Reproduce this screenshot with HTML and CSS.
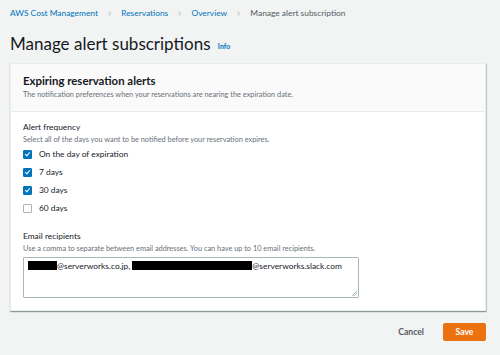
FILE: index.html
```html
<!DOCTYPE html>
<html lang="en">
<head>
  <meta charset="UTF-8">
  <title>Manage alert subscriptions</title>
  <link rel="stylesheet" href="styles.css">
</head>
<body>

  <nav class="crumbs">
    <a href="#">AWS Cost Management</a>
    <span class="sep">&gt;</span>
    <a href="#">Reservations</a>
    <span class="sep">&gt;</span>
    <a href="#">Overview</a>
    <span class="sep">&gt;</span>
    <span class="current">Manage alert subscription</span>
  </nav>

  <h1 class="title">Manage alert subscriptions <a class="info" href="#">Info</a></h1>

  <div class="card">
    <div class="card-head">
      <h2>Expiring reservation alerts</h2>
      <p>The notification preferences when your reservations are nearing the expiration date.</p>
    </div>

    <div class="card-body">
      <div class="field">
        <div class="label">Alert frequency</div>
        <div class="hint">Select all of the days you want to be notified before your reservation expires.</div>
        <div class="checks">
          <label class="check"><span class="box on"></span>On the day of expiration</label>
          <label class="check"><span class="box on"></span>7 days</label>
          <label class="check"><span class="box on"></span>30 days</label>
          <label class="check"><span class="box"></span>60 days</label>
        </div>
      </div>

      <div class="field">
        <div class="label">Email recipients</div>
        <div class="hint">Use a comma to separate between email addresses. You can have up to 10 email recipients.</div>
        <div class="textarea">
          <span class="redact short"></span>@serverworks.co.jp, <span class="redact long"></span>@serverworks.slack.com
          <span class="grip"></span>
        </div>
      </div>
    </div>
  </div>

  <div class="actions">
    <button class="btn-link">Cancel</button>
    <button class="btn-primary">Save</button>
  </div>

</body>
</html>
```

FILE: styles.css
```css
body {
  margin: 0;
  padding: 0 14px 0 10px;
  background: #f2f3f3;
  font-family: Lato, "Noto Sans", Arial, sans-serif;
  color: #16191f;
}

.crumbs {
  display: flex;
  align-items: center;
  gap: 9px;
  height: 26px;
  font-size: 8.4px;
}

.crumbs a {
  color: #0073bb;
  text-decoration: none;
}

.crumbs .sep {
  color: #aab7b8;
  font-size: 9px;
  transform: scaleX(0.7);
}

.crumbs .current {
  color: #545b64;
}

.title {
  margin: 4px 0 3px;
  font-size: 17px;
  font-weight: 400;
  line-height: 28px;
}

.info {
  font-size: 7px;
  font-weight: 700;
  color: #0073bb;
  text-decoration: none;
  vertical-align: middle;
  margin-left: 3px;
}

.card {
  background: #fff;
  border: 1px solid #eaeded;
  box-shadow: 0 1px 1px 0 rgba(0, 28, 36, 0.3), 1px 1px 1px 0 rgba(0, 28, 36, 0.15);
}

.card-head {
  background: #fafafa;
  border-bottom: 1px solid #eaeded;
  padding: 9px 12px 8px;
  height: 30px;
}

.card-head h2 {
  margin: 0;
  font-size: 11.4px;
  font-weight: 700;
  line-height: 16px;
}

.card-head p {
  margin: 1px 0 0;
  font-size: 7.35px;
  color: #687078;
  line-height: 10px;
}

.card-body {
  padding: 8px 12px 12px;
  display: flex;
  flex-direction: column;
  gap: 14px;
}

.label {
  font-size: 8.4px;
  line-height: 14px;
  color: #16191f;
}

.hint {
  font-size: 7.35px;
  line-height: 10px;
  color: #687078;
  margin-top: 1px;
}

.checks {
  display: flex;
  flex-direction: column;
  gap: 5px;
  margin-top: 3px;
}

.check {
  display: flex;
  align-items: center;
  gap: 7px;
  height: 13px;
  font-size: 8.4px;
  color: #16191f;
}

.box {
  width: 7px;
  height: 7px;
  border: 1px solid #aab7b8;
  border-radius: 1px;
  background: #fff;
  position: relative;
}

.box.on {
  background: #0073bb;
  border-color: #0073bb;
}

.box.on::after {
  content: "";
  position: absolute;
  left: 2px;
  top: 0;
  width: 2px;
  height: 4px;
  border: solid #fff;
  border-width: 0 1.3px 1.3px 0;
  transform: rotate(40deg);
}

.textarea {
  position: relative;
  margin-top: 3px;
  width: 326px;
  height: 33px;
  border: 1px solid #aab7b8;
  border-radius: 1px;
  padding: 3px 4px;
  font-size: 8.4px;
  line-height: 10px;
  color: #16191f;
  white-space: nowrap;
}

.redact {
  display: inline-block;
  background: #000;
  height: 9px;
  vertical-align: -1px;
}

.redact.short {
  width: 29px;
}

.redact.long {
  width: 120px;
}

.grip {
  position: absolute;
  right: 1px;
  bottom: 1px;
  width: 5px;
  height: 5px;
  background: linear-gradient(135deg, transparent 45%, #aab7b8 45%, #aab7b8 55%, transparent 55%, transparent 70%, #aab7b8 70%, #aab7b8 80%, transparent 80%);
}

.actions {
  display: flex;
  justify-content: flex-end;
  align-items: center;
  gap: 19px;
  margin-top: 12px;
}

.btn-link {
  border: none;
  background: none;
  font-family: inherit;
  font-size: 8.6px;
  font-weight: 700;
  color: #545b64;
  padding: 0;
}

.btn-primary {
  width: 43px;
  height: 18px;
  border: 1px solid #ec7211;
  border-radius: 2px;
  background: #ec7211;
  color: #fff;
  font-family: inherit;
  font-size: 8.6px;
  font-weight: 700;
  padding: 0;
}
```
